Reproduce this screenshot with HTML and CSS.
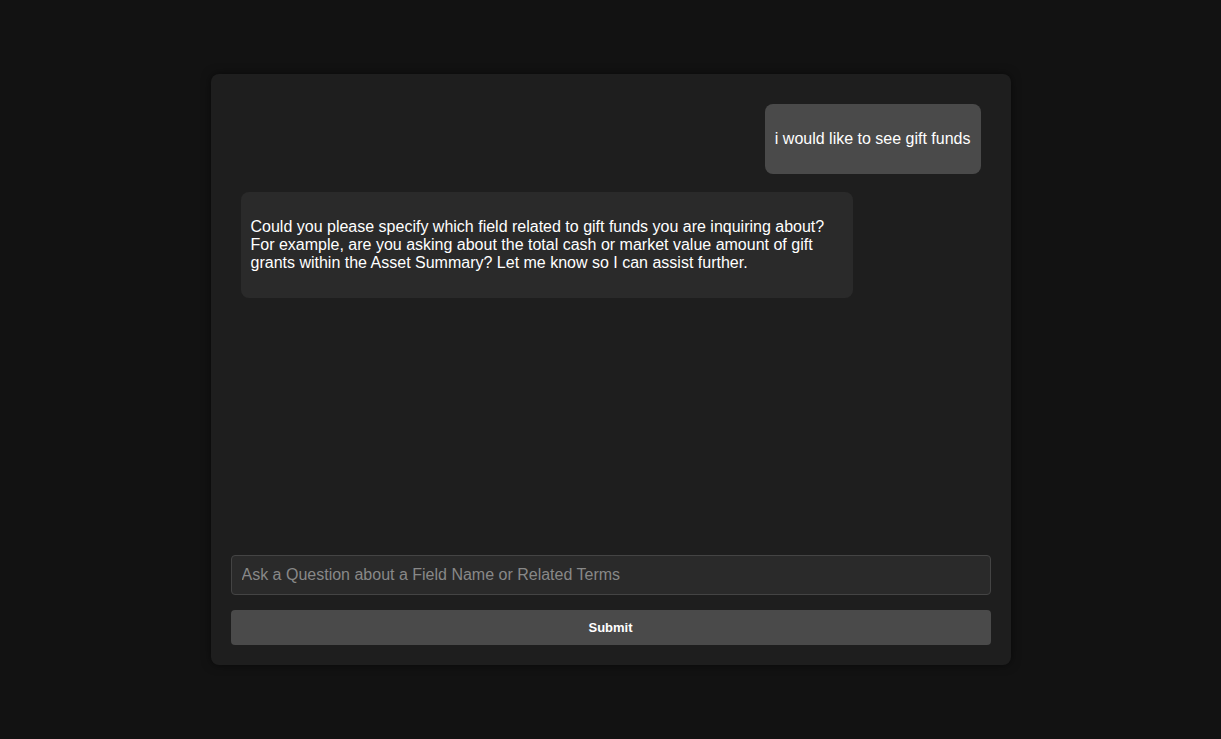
FILE: index.html
```html
<!DOCTYPE html>
<html>
<head>
<meta charset="utf-8">
<link rel="stylesheet" href="styles.css">
</head>
<body>
<div class="card">
  <div class="messages">
    <div class="msg user"><p>i would like to see gift funds</p></div>
    <div class="msg bot"><p>Could you please specify which field related to gift funds you are inquiring about? For example, are you asking about the total cash or market value amount of gift grants within the Asset Summary? Let me know so I can assist further.</p></div>
  </div>
  <input class="ask" type="text" placeholder="Ask a Question about a Field Name or Related Terms">
  <button class="submit">Submit</button>
</div>
</body>
</html>
```
FILE: styles.css
```css
html, body {
  margin: 0;
  height: 100%;
}
body {
  background: #121212;
  font-family: "Liberation Sans", Arial, sans-serif;
  color: #fff;
  display: flex;
  align-items: center;
  justify-content: center;
}
.card {
  width: 800px;
  height: 591px;
  box-sizing: border-box;
  padding: 20px;
  background: #1e1e1e;
  border-radius: 8px;
  box-shadow: 0 0 10px rgba(0,0,0,0.5);
  display: flex;
  flex-direction: column;
}
.messages {
  flex: 1;
  padding: 10px;
  display: flex;
  flex-direction: column;
  gap: 18px;
  align-items: flex-start;
}
.msg {
  max-width: 80%;
  padding: 0 10px;
  border-radius: 8px;
  font-size: 16px;
  line-height: 18px;
  padding-top: 10px;
  padding-bottom: 10px;
}
.msg p {
  margin: 16px 0;
}
.user {
  align-self: flex-end;
  background: #4a4a4a;
}
.bot {
  background: #2a2a2a;
}
.ask {
  margin-top: 10px;
  height: 40px;
  box-sizing: border-box;
  padding: 0 10px;
  background: #2a2a2a;
  border: 1px solid #444;
  border-radius: 4px;
  color: #fff;
  font-family: "Liberation Sans", Arial, sans-serif;
  font-size: 16px;
  outline: none;
}
.ask::placeholder {
  color: #888;
}
.submit {
  margin-top: 15px;
  height: 35px;
  background: #4a4a4a;
  color: #fff;
  border: none;
  border-radius: 4px;
  font-family: "Liberation Sans", Arial, sans-serif;
  font-size: 13px;
  font-weight: bold;
}
```
